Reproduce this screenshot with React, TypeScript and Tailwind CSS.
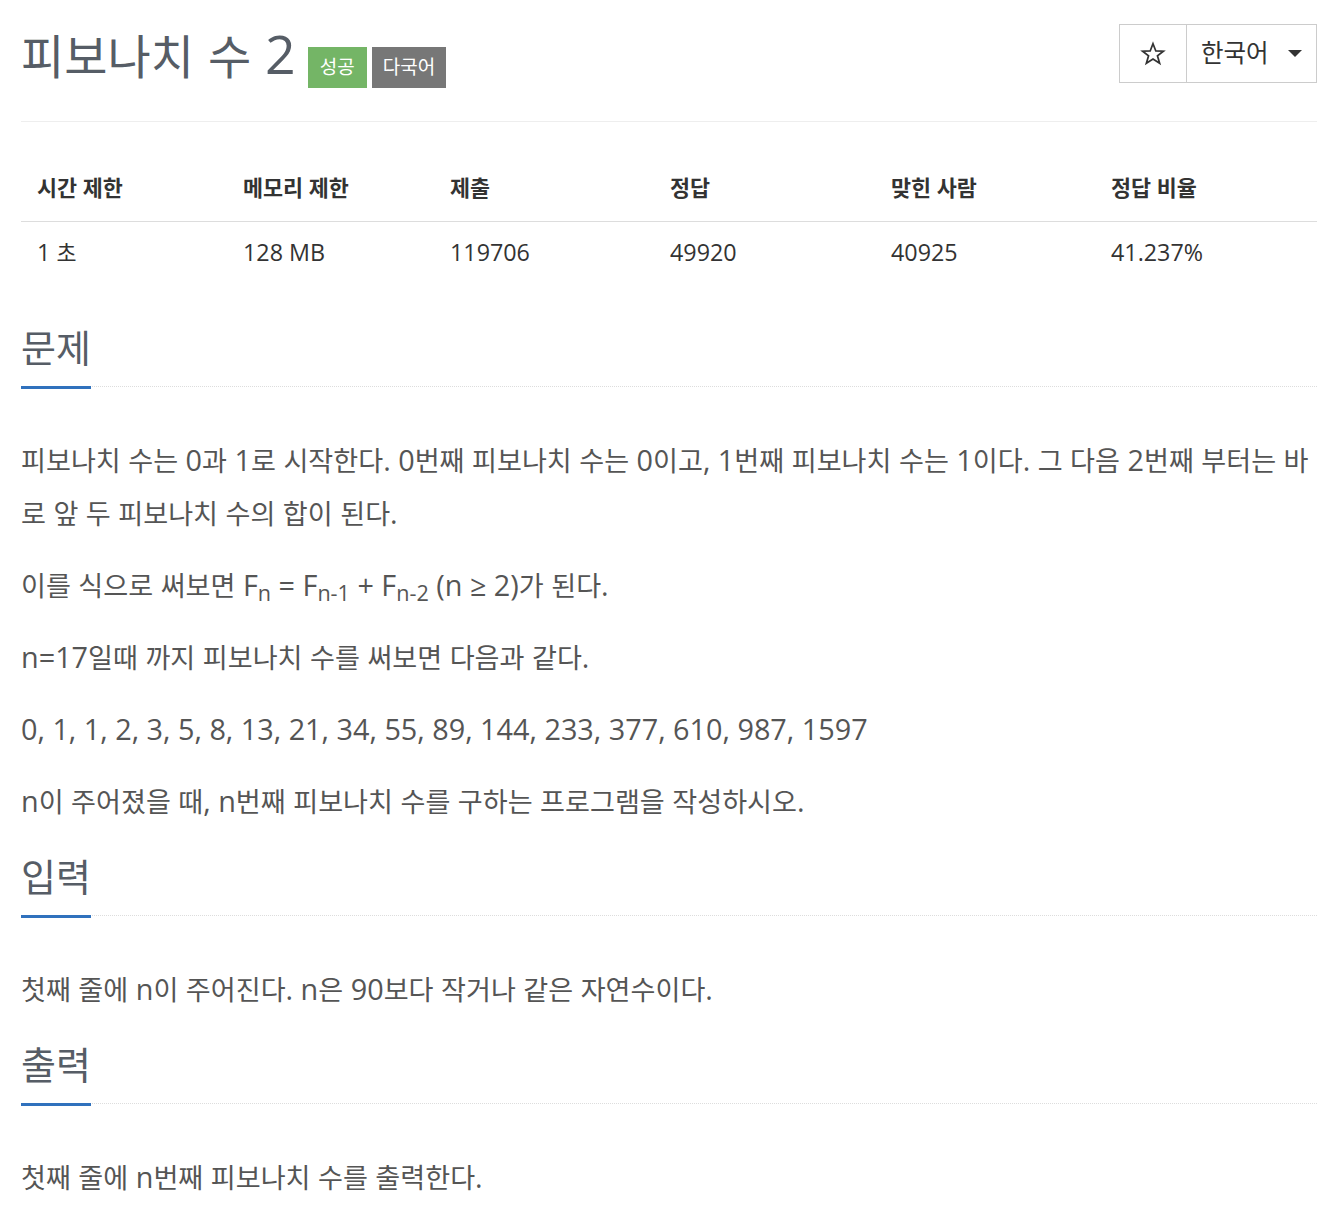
import React from 'react';

// Hangul in the reference is narrower than Latin at the same size,
// so Latin runs are set a bit larger than the surrounding Hangul.
function Mixed({ text, latin = 'text-[1.063em]' }: { text: string; latin?: string }) {
  const parts = text.split(/([^\uAC00-\uD7A3]+)/).filter(p => p !== '');
  return (
    <>
      {parts.map((p, i) =>
        /[\uAC00-\uD7A3]/.test(p) ? (
          Array.from(p).map((ch, j) => <span key={`${i}-${j}`}>{ch}</span>)
        ) : (
          <span key={i} className={`${latin} leading-none`}>{p}</span>
        )
      )}
    </>
  );
}

const stats = [
  { label: '시간 제한', value: '1 초', w: 'w-[206px]' },
  { label: '메모리 제한', value: '128 MB', w: 'w-[207px]' },
  { label: '제출', value: '119706', w: 'w-[220px]' },
  { label: '정답', value: '49920', w: 'w-[221px]' },
  { label: '맞힌 사람', value: '40925', w: 'w-[220px]' },
  { label: '정답 비율', value: '41.237%', w: 'w-[222px]' },
];

function Heading({ title, first }: { title: string; first?: boolean }) {
  return (
    <div className={`${first ? 'mt-[42px]' : 'mt-[28px]'} border-b border-dotted border-[#ddd]`}>
      <span className="inline-block text-[38px] leading-[40px] text-[#565d66] pb-[19px] border-b-[3px] border-[#3071bd] -mb-[3px] align-bottom">
        {title}
      </span>
    </div>
  );
}

function Para({ children, first }: { children: React.ReactNode; first?: boolean }) {
  return (
    <p className={`${first ? 'mt-[47px]' : 'mt-[19px]'} text-[27.1px] leading-[53px] text-[#555]`}>{children}</p>
  );
}

export default function App() {
  return (
    <div className="min-h-[1230px] bg-white font-['Open_Sans','Noto_Sans_CJK_KR',sans-serif]">
      <div className="w-[1296px] ml-[21px] pb-[30px]">
        {/* header */}
        <div className="flex justify-between items-start pt-[24px] pb-[33px] border-b border-[#eee]">
          <div className="flex items-start">
            <h1 className="text-[47px] leading-[59px] mt-[3px] text-[#565d66] font-normal">
              <Mixed text="피보나치 수 2" latin="text-[1.14em]" />
            </h1>
            <span className="ml-[12px] mt-[23px] h-[41px] px-[12px] bg-[#74b566] text-white text-[19px] leading-[41px]">
              성공
            </span>
            <span className="ml-[5px] mt-[23px] h-[41px] px-[11px] bg-[#777] text-white text-[19px] leading-[41px]">
              다국어
            </span>
          </div>
          <div className="flex h-[59px] border border-[#ccc] text-[#333]">
            <button className="w-[67px] flex items-center justify-center border-r border-[#ccc]">
              <svg width="26" height="26" viewBox="0 0 24 24" fill="none" stroke="#333" strokeWidth="1.6" strokeLinejoin="miter">
                <polygon points="12,2.5 14.6,9.2 21.6,9.4 16.1,13.7 18.1,20.6 12,16.6 5.9,20.6 7.9,13.7 2.4,9.4 9.4,9.2" />
              </svg>
            </button>
            <button className="w-[129px] flex items-center pl-[14px] pr-[14px] justify-between text-[24.5px]">
              <span>한국어</span>
              <svg width="14" height="8" viewBox="0 0 14 8" fill="#333">
                <polygon points="0,0 14,0 7,7" />
              </svg>
            </button>
          </div>
        </div>

        {/* limits table */}
        <table className="mt-[35px] w-full table-fixed border-collapse text-[#333] text-[21.8px]">
          <thead>
            <tr className="border-b border-[#ddd]">
              {stats.map(s => (
                <th key={s.label} className={`${s.w} h-[64px] px-[16px] text-left font-bold`}>
                  {s.label}
                </th>
              ))}
            </tr>
          </thead>
          <tbody>
            <tr>
              {stats.map(s => (
                <td key={s.label} className="h-[64px] px-[16px]">
                  <Mixed text={s.value} latin="text-[1.069em]" />
                </td>
              ))}
            </tr>
          </tbody>
        </table>

        <Heading title="문제" first />
        <Para first>
          <Mixed text="피보나치 수는 0과 1로 시작한다. 0번째 피보나치 수는 0이고, 1번째 피보나치 수는 1이다. 그 다음 2번째 부터는 바로 앞 두 피보나치 수의 합이 된다." />
        </Para>
        <Para>
          <Mixed text="이를 식으로 써보면 " />
          <span className="text-[1.063em] leading-none">
            F<sub>n</sub> = F<sub>n-1</sub> + F<sub>n-2</sub> (n ≥ 2)
          </span>
          <Mixed text="가 된다." />
        </Para>
        <Para>
          <Mixed text="n=17일때 까지 피보나치 수를 써보면 다음과 같다." />
        </Para>
        <Para>
          <Mixed text="0, 1, 1, 2, 3, 5, 8, 13, 21, 34, 55, 89, 144, 233, 377, 610, 987, 1597" />
        </Para>
        <Para>
          <Mixed text="n이 주어졌을 때, n번째 피보나치 수를 구하는 프로그램을 작성하시오." />
        </Para>

        <Heading title="입력" />
        <Para first>
          <Mixed text="첫째 줄에 n이 주어진다. n은 90보다 작거나 같은 자연수이다." />
        </Para>

        <Heading title="출력" />
        <Para first>
          <Mixed text="첫째 줄에 n번째 피보나치 수를 출력한다." />
        </Para>
      </div>
    </div>
  );
}
